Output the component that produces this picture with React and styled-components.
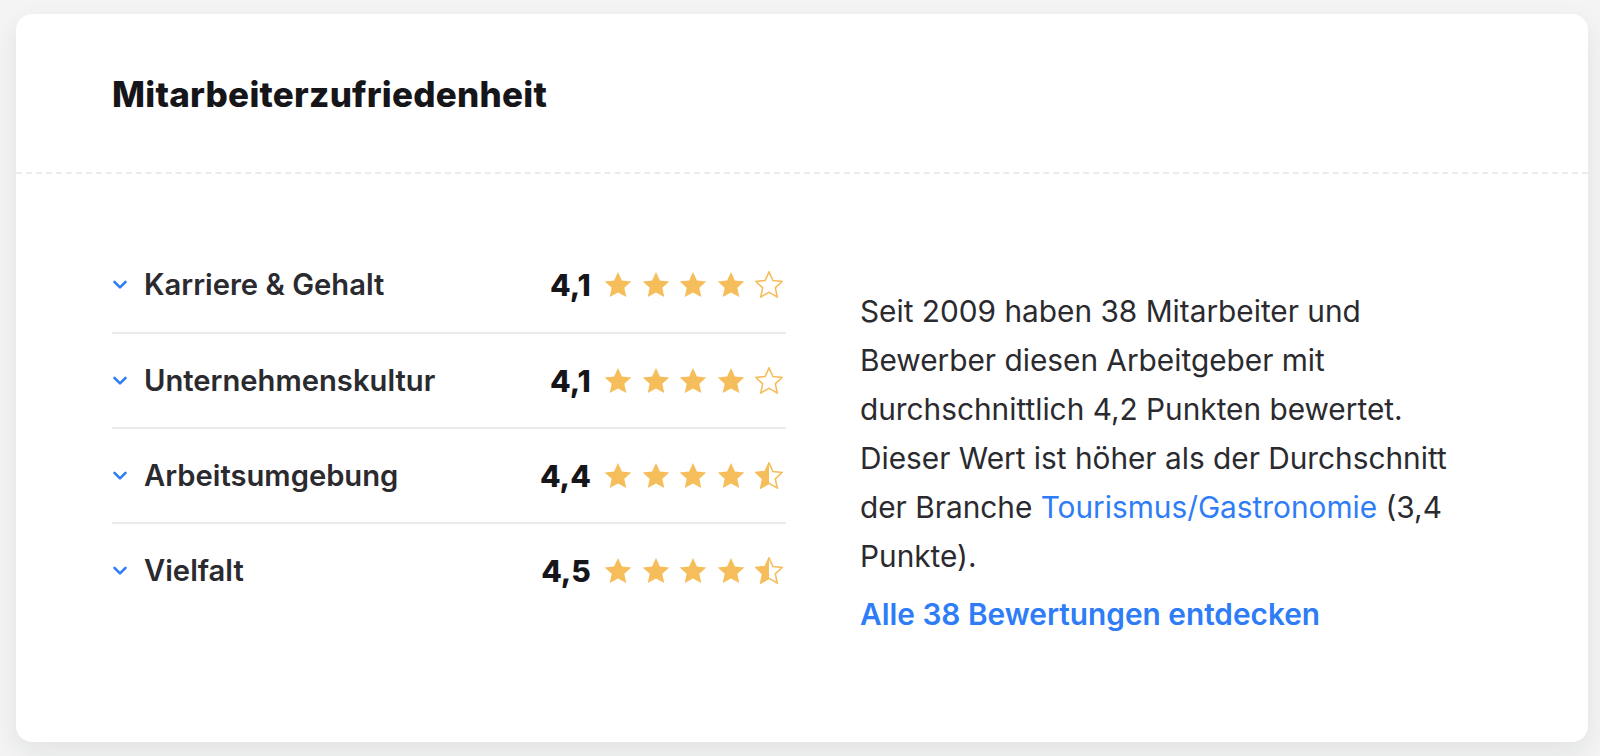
import React from "react";
import styled, { createGlobalStyle } from "styled-components";

const Global = createGlobalStyle`
  html, body { margin: 0; padding: 0; background: #f3f4f3; }
  body { font-family: Inter, "Noto Sans", sans-serif; -webkit-font-smoothing: antialiased; }
  * { box-sizing: border-box; }
`;

const Page = styled.div`
  padding: 14px 12px 14px 16px;
  min-height: 756px;
`;

const Card = styled.section`
  background: #ffffff;
  border-radius: 16px;
  box-shadow: 0 10px 28px rgba(30, 40, 35, 0.08);
  height: 728px;
  display: flex;
  flex-direction: column;
`;

const Header = styled.header`
  padding: 58px 96px 56px;
  border-bottom: 2px dashed #ebebeb;
`;

const Title = styled.h2`
  margin: 0;
  font-family: Inter, sans-serif;
  font-weight: 800;
  font-size: 35px;
  line-height: 44px;
  color: #16161a;
  letter-spacing: 0.25px;
`;

const Body = styled.div`
  padding: 63px 96px 0;
  display: grid;
  grid-template-columns: 674px 614px;
  column-gap: 74px;
  align-items: start;
`;

const List = styled.ul`
  list-style: none;
  margin: 0;
  padding: 0;
`;

const Row = styled.li`
  height: 95px;
  display: flex;
  align-items: center;
  border-top: ${(p) => (p.$first ? "none" : "2px solid #ebebeb")};
`;

const Chevron = styled.svg`
  width: 16px;
  height: 11px;
  flex: none;
  margin-right: 16px;
`;

const Label = styled.span`
  flex: 1;
  font-size: 29.2px;
  font-weight: 600;
  color: #2a2a2f;
`;

const Score = styled.span`
  font-size: 30px;
  font-weight: 800;
  color: #16161a;
  margin-right: 13px;
`;

const Stars = styled.div`
  display: flex;
  gap: 9.8px;
  margin-right: 3px;
`;

const Side = styled.div`
  padding-top: 50px;
`;

const Text = styled.p`
  margin: 0;
  font-size: 29.8px;
  line-height: 49px;
  color: #2a2a2f;
`;

const Link = styled.a`
  color: #2f7df6;
  text-decoration: none;
  font-weight: ${(p) => (p.$strong ? 600 : 400)};
`;

const More = styled(Link)`
  display: block;
  margin-top: 13px;
  line-height: 40px;
  font-size: 29.8px;
`;

const STAR = "M14 0.9L17.9 9.5L27.3 10.4L20.3 16.8L22.3 26L14 21.4L5.7 26L7.7 16.8L0.7 10.4L10.1 9.5Z";

function Star({ kind, id }) {
  const gold = "#f6bd5b";
  return (
    <svg width="28" height="27" viewBox="0 0 28 27">
      {kind === "half" && (
        <defs>
          <clipPath id={id}>
            <rect x="0" y="0" width="14" height="27" />
          </clipPath>
        </defs>
      )}
      {kind === "full" && <path d={STAR} fill={gold} />}
      {kind === "half" && <path d={STAR} fill={gold} clipPath={`url(#${id})`} />}
      {kind !== "full" && (
        <path d={STAR} fill="none" stroke={gold} strokeWidth="1.6" strokeLinejoin="miter" />
      )}
    </svg>
  );
}

function StarRow({ value, idx }) {
  const kinds = [];
  for (let i = 1; i <= 5; i++) {
    if (value >= i - 0.2) kinds.push("full");
    else if (value >= i - 0.7) kinds.push("half");
    else kinds.push("empty");
  }
  return (
    <Stars>
      {kinds.map((k, i) => (
        <Star key={i} kind={k} id={`h${idx}-${i}`} />
      ))}
    </Stars>
  );
}

const rows = [
  { label: "Karriere & Gehalt", score: "4,1", value: 4.1 },
  { label: "Unternehmenskultur", score: "4,1", value: 4.1 },
  { label: "Arbeitsumgebung", score: "4,4", value: 4.4 },
  { label: "Vielfalt", score: "4,5", value: 4.5 },
];

export default function App() {
  return (
    <>
      <Global />
      <Page>
        <Card>
          <Header>
            <Title>Mitarbeiterzufriedenheit</Title>
          </Header>
          <Body>
            <List>
              {rows.map((r, i) => (
                <Row key={r.label} $first={i === 0}>
                  <Chevron viewBox="0 0 16 11">
                    <path d="M2.5 2.8l5.5 5.5 5.5-5.5" fill="none" stroke="#2f7df6" strokeWidth="2.6" strokeLinecap="round" strokeLinejoin="round" />
                  </Chevron>
                  <Label>{r.label}</Label>
                  <Score>{r.score}</Score>
                  <StarRow value={r.value} idx={i} />
                </Row>
              ))}
            </List>
            <Side>
              <Text>
                Seit 2009 haben 38 Mitarbeiter und Bewerber diesen Arbeitgeber mit durchschnittlich 4,2 Punkten
                bewertet. Dieser Wert ist höher als der Durchschnitt der Branche{" "}
                <Link href="#">Tourismus/Gastronomie</Link> (3,4 Punkte).
              </Text>
              <More href="#" $strong>
                Alle 38 Bewertungen entdecken
              </More>
            </Side>
          </Body>
        </Card>
      </Page>
    </>
  );
}
